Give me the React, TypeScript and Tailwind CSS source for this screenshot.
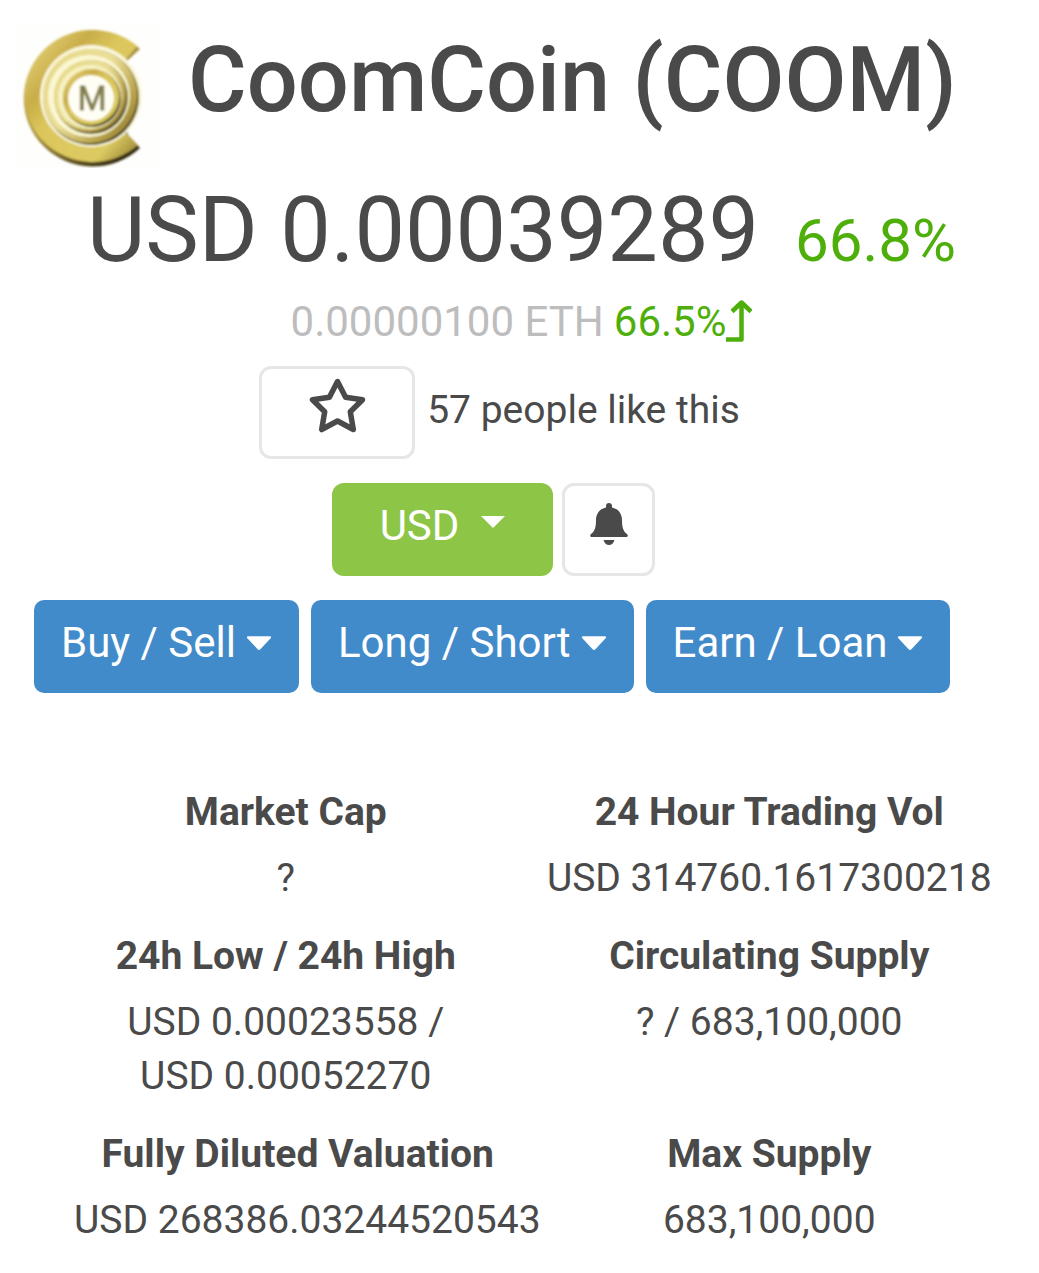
import { ReactNode } from "react";
import clsx from "clsx";

const tradeMenus = ["Buy / Sell", "Long / Short", "Earn / Loan"];

const CoinLogo = () => (
  <svg
    viewBox="0 0 144 144"
    className="size-36 shrink-0"
    role="img"
    aria-label="CoomCoin logo"
  >
    <defs>
      <linearGradient id="gold" x1="0" y1="0" x2="1" y2="1">
        <stop offset="0" stopColor="#eee08a" />
        <stop offset="0.3" stopColor="#c9ad48" />
        <stop offset="0.45" stopColor="#dcc65c" />
        <stop offset="0.8" stopColor="#dccb62" />
        <stop offset="1" stopColor="#8d7a30" />
      </linearGradient>
      <linearGradient id="rim" x1="0.1" y1="0" x2="0.8" y2="1">
        <stop offset="0" stopColor="#e3d27a" />
        <stop offset="0.55" stopColor="#a48e3c" />
        <stop offset="1" stopColor="#2f2810" />
      </linearGradient>
      <linearGradient id="ring" x1="0" y1="0" x2="1" y2="0.8">
        <stop offset="0" stopColor="#e6d88a" />
        <stop offset="0.5" stopColor="#eadf98" />
        <stop offset="0.85" stopColor="#b39d46" />
        <stop offset="1" stopColor="#8f7a32" />
      </linearGradient>
      <filter id="soft">
        <feGaussianBlur stdDeviation="0.9" />
      </filter>
    </defs>
    <rect width="144" height="144" fill="#fefefc" />
    <g filter="url(#soft)" transform="translate(0 2)">
      <path
        d="M124 23 A69 68 0 1 0 124 122 L112 109 L104 74 L112 34 Z"
        fill="url(#rim)"
      />
      <path
        d="M121 20 A68 66 0 1 0 122 119 L110 107 L104 74 L110 33 Z"
        fill="url(#gold)"
      />
      <circle cx="75" cy="70" r="51" fill="#fbf8dc" />
      <circle cx="75" cy="71" r="48" fill="url(#rim)" />
      <circle cx="74" cy="70" r="47" fill="url(#ring)" />
      <circle cx="73" cy="70" r="41" fill="#fbf7d2" />
      <circle cx="75" cy="71" r="37" fill="url(#rim)" />
      <circle cx="74" cy="70" r="36" fill="url(#ring)" />
      <circle cx="74" cy="71" r="32" fill="#f8f2c2" />
      <circle cx="76" cy="72" r="29" fill="url(#rim)" />
      <circle cx="75" cy="71" r="28" fill="url(#gold)" />
      <circle cx="75" cy="72" r="23" fill="#fffef4" />
      <text
        x="76"
        y="84"
        textAnchor="middle"
        fontFamily="Liberation Sans, sans-serif"
        fontSize="35"
        stroke="#85804f"
        strokeWidth="1"
        fill="#85804f"
      >
        M
      </text>
    </g>
  </svg>
);

const Caret = () => (
  <svg viewBox="0 0 26 16" className="h-4 w-[26px]" aria-hidden="true">
    <path
      d="M2.2 1.2H23.8Q26 1.4 24.6 3.2L14.4 14.2Q13 15.6 11.6 14.2L1.4 3.2Q0 1.4 2.2 1.2Z"
      fill="currentColor"
    />
  </svg>
);

type StatProps = {
  label: string;
  children: ReactNode;
  className?: string;
  labelClassName?: string;
};

const Stat = ({ label, children, className, labelClassName }: StatProps) => (
  <div className={clsx("flex flex-col gap-3", className)}>
    <dt className={clsx("font-bold", labelClassName)}>{label}</dt>
    <dd className="whitespace-nowrap">{children}</dd>
  </div>
);

const App = () => {
  return (
    <main className="bg-white pt-6 pb-7 font-[Roboto,sans-serif] text-[#4a4a4a]">
      <header className="flex items-start gap-7 px-4">
        <CoinLogo />
        <h1 className="whitespace-nowrap text-[90px] leading-[114px] font-medium">
          CoomCoin (COOM)
        </h1>
      </header>

      <div className="mt-3 flex items-baseline justify-center gap-9 whitespace-nowrap pl-1 leading-[102px]">
        <span className="text-[90px]">USD 0.00039289</span>
        <span className="text-[60px] text-[#4eaf0a]">66.8%</span>
      </div>

      <div className="flex items-center justify-center pl-1 text-[42px] leading-[60px]">
        <span className="text-[#bdbdbd]">0.00000100 ETH</span>
        <span className="ml-2.5 text-[#4eaf0a]">66.5%</span>
        <svg
          viewBox="0 0 26 44"
          className="h-11 w-[26px] text-[#4eaf0a]"
          fill="none"
          stroke="currentColor"
          strokeWidth="4.5"
          strokeLinejoin="round"
          aria-label="up"
        >
          <path d="M0 39.500H15.500V2.500" />
          <path d="M6 11.500L15.500 2.500L25 11.500" />
        </svg>
      </div>

      <div className="mt-3.5 flex items-center justify-center gap-3 pr-10 text-[39px]">
        <button
          aria-label="Like"
          className="flex h-[93px] w-[156px] items-start justify-center rounded-xl border-3 border-[#e6e6e6] pt-2"
        >
          <svg
            viewBox="0 0 58 56"
            className="h-14 w-[58px]"
            fill="none"
            stroke="currentColor"
            strokeWidth="5.5"
            strokeLinejoin="round"
            aria-hidden="true"
          >
            <path d="M29.500 4.500L37.600 20.200L54.500 22.700L42.300 34.800L45.300 52.500L29.500 44L13.700 52.500L16.700 34.800L4.500 22.700L21.400 20.200Z" />
          </svg>
        </button>
        <span className="pb-1">57 people like this</span>
      </div>

      <div className="mt-6 flex justify-center gap-[9px] pr-13 text-[42px]">
        <button className="flex h-[93px] items-center gap-[22px] rounded-xl bg-[#8dc647] px-12 pb-2 text-white">
          USD
          <svg viewBox="0 0 24 12" className="mb-2 h-3 w-6" aria-hidden="true">
            <path d="M0 0H24L12 12Z" fill="currentColor" />
          </svg>
        </button>
        <button
          aria-label="Price alert"
          className="flex size-[93px] items-start justify-center rounded-xl border-3 border-[#e6e6e6] pt-4"
        >
          <svg viewBox="0 0 38 44" className="h-11 w-[38px]" aria-hidden="true">
            <path
              d="M19 1C20.8 1 22 2.3 22 4V5.4C28 6.7 32 11.5 32 18C32 26 33.5 29.5 37 32C38.5 33.7 37.6 35 36 35H2C.4 35-.5 33.7 1 32C4.5 29.5 6 26 6 18C6 11.5 10 6.7 16 5.4V4C16 2.3 17.2 1 19 1Z"
              fill="currentColor"
            />
            <path d="M13.5 38H24.5Q23 43 19 43T13.5 38Z" fill="currentColor" />
          </svg>
        </button>
      </div>

      <div className="mt-6 flex gap-3 pl-[34px] text-[42px]">
        {tradeMenus.map((menu) => (
          <button
            key={menu}
            className="flex h-[93px] items-center gap-[10px] whitespace-nowrap rounded-[10px] bg-[#428bca] px-[27px] pb-2 text-white"
          >
            {menu}
            <Caret />
          </button>
        ))}
      </div>

      <dl className="mt-23 grid grid-cols-2 gap-y-6 pr-7 pl-11 text-center text-[39px] leading-[54px]">
        <Stat label="Market Cap" className="px-7.5">
          ?
        </Stat>
        <Stat label="24 Hour Trading Vol" className="px-4">
          USD 314760.1617300218
        </Stat>
        <Stat label="24h Low / 24h High" className="px-7.5">
          USD 0.00023558 /
          <br />
          USD 0.00052270
        </Stat>
        <Stat label="Circulating Supply" className="px-4">
          ? / 683,100,000
        </Stat>
        <Stat
          label="Fully Diluted Valuation"
          className="px-7.5"
          labelClassName="pl-6"
        >
          USD 268386.03244520543
        </Stat>
        <Stat label="Max Supply" className="px-4">
          683,100,000
        </Stat>
      </dl>
    </main>
  );
};

export default App;
